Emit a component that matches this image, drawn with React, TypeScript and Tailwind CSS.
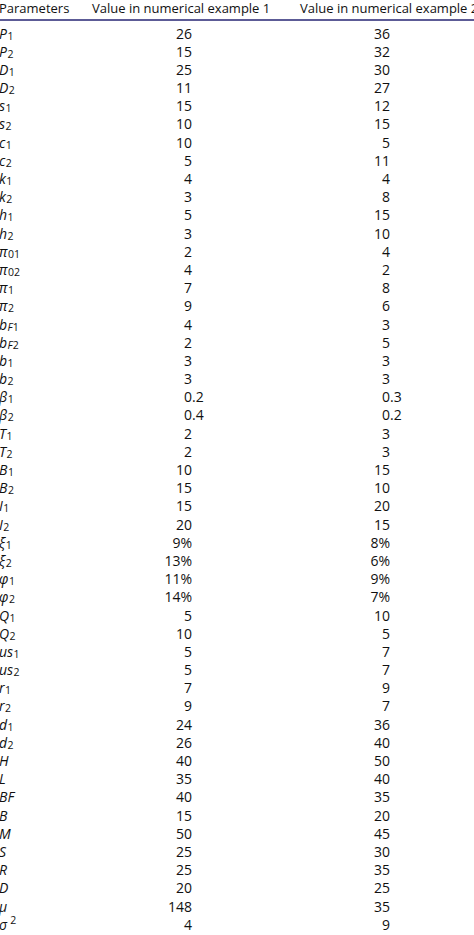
import React from 'react';

type Param = {
  base: string;
  sub?: React.ReactNode;
  sup?: string;
  v1: string;
  v2: string;
};

const rows: Param[] = [
  { base: 'P', sub: '1', v1: '26', v2: '36' },
  { base: 'P', sub: '2', v1: '15', v2: '32' },
  { base: 'D', sub: '1', v1: '25', v2: '30' },
  { base: 'D', sub: '2', v1: '11', v2: '27' },
  { base: 's', sub: '1', v1: '15', v2: '12' },
  { base: 's', sub: '2', v1: '10', v2: '15' },
  { base: 'c', sub: '1', v1: '10', v2: '5' },
  { base: 'c', sub: '2', v1: '5', v2: '11' },
  { base: 'k', sub: '1', v1: '4', v2: '4' },
  { base: 'k', sub: '2', v1: '3', v2: '8' },
  { base: 'h', sub: '1', v1: '5', v2: '15' },
  { base: 'h', sub: '2', v1: '3', v2: '10' },
  { base: 'π', sub: '01', v1: '2', v2: '4' },
  { base: 'π', sub: '02', v1: '4', v2: '2' },
  { base: 'π', sub: '1', v1: '7', v2: '8' },
  { base: 'π', sub: '2', v1: '9', v2: '6' },
  { base: 'b', sub: <><i>F</i>1</>, v1: '4', v2: '3' },
  { base: 'b', sub: <><i>F</i>2</>, v1: '2', v2: '5' },
  { base: 'b', sub: '1', v1: '3', v2: '3' },
  { base: 'b', sub: '2', v1: '3', v2: '3' },
  { base: 'β', sub: '1', v1: '0.2', v2: '0.3' },
  { base: 'β', sub: '2', v1: '0.4', v2: '0.2' },
  { base: 'T', sub: '1', v1: '2', v2: '3' },
  { base: 'T', sub: '2', v1: '2', v2: '3' },
  { base: 'B', sub: '1', v1: '10', v2: '15' },
  { base: 'B', sub: '2', v1: '15', v2: '10' },
  { base: 'I', sub: '1', v1: '15', v2: '20' },
  { base: 'I', sub: '2', v1: '20', v2: '15' },
  { base: 'ξ', sub: '1', v1: '9%', v2: '8%' },
  { base: 'ξ', sub: '2', v1: '13%', v2: '6%' },
  { base: 'φ', sub: '1', v1: '11%', v2: '9%' },
  { base: 'φ', sub: '2', v1: '14%', v2: '7%' },
  { base: 'Q', sub: '1', v1: '5', v2: '10' },
  { base: 'Q', sub: '2', v1: '10', v2: '5' },
  { base: 'us', sub: '1', v1: '5', v2: '7' },
  { base: 'us', sub: '2', v1: '5', v2: '7' },
  { base: 'r', sub: '1', v1: '7', v2: '9' },
  { base: 'r', sub: '2', v1: '9', v2: '7' },
  { base: 'd', sub: '1', v1: '24', v2: '36' },
  { base: 'd', sub: '2', v1: '26', v2: '40' },
  { base: 'H', v1: '40', v2: '50' },
  { base: 'L', v1: '35', v2: '40' },
  { base: 'BF', v1: '40', v2: '35' },
  { base: 'B', v1: '15', v2: '20' },
  { base: 'M', v1: '50', v2: '45' },
  { base: 'S', v1: '25', v2: '30' },
  { base: 'R', v1: '25', v2: '35' },
  { base: 'D', v1: '20', v2: '25' },
  { base: 'μ', v1: '148', v2: '35' },
  { base: 'σ', sup: '2', v1: '4', v2: '9' },
];

function split(v: string) {
  const i = v.indexOf('.');
  if (i < 0) return [v, ''];
  return [v.slice(0, i), v.slice(i)];
}

function ParamName({ p }: { p: Param }) {
  return (
    <span className="italic whitespace-nowrap">
      {p.base}
      {p.sub && <sub className="not-italic text-[10.5px] relative top-[1px] ml-[0.5px]">{p.sub}</sub>}
      {p.sup && <sup className="not-italic text-[10.5px] ml-[3px]">{p.sup}</sup>}
    </span>
  );
}

export default function App() {
  return (
    <div
      className="w-[474px] h-[935px] bg-white text-[#111] overflow-hidden"
      style={{ fontFamily: '"Open Sans", "Noto Sans", sans-serif' }}
    >
      {/* header */}
      <div className="grid grid-cols-[92px_208px_1fr] h-[19px] leading-[17px] text-[13px] whitespace-nowrap">
        <div className="-ml-[1px]">Parameters</div>
        <div>Value in numerical example 1</div>
        <div>Value in numerical example 2</div>
      </div>
      <div className="h-[1.5px] bg-[#5c5b96]" />

      {/* body */}
      <div className="pt-[4px] text-[14px]">
        {rows.map((p, i) => {
          const [a1, f1] = split(p.v1);
          const [a2, f2] = split(p.v2);
          return (
            <div key={i} className="grid grid-cols-[140px_52px_146px_52px_1fr] h-[18.2px] leading-[18px]">
              <div className="-ml-[1px]">
                <ParamName p={p} />
              </div>
              <div className="text-right">{a1}</div>
              <div>{f1}</div>
              <div className="text-right">{a2}</div>
              <div>{f2}</div>
            </div>
          );
        })}
      </div>
    </div>
  );
}
